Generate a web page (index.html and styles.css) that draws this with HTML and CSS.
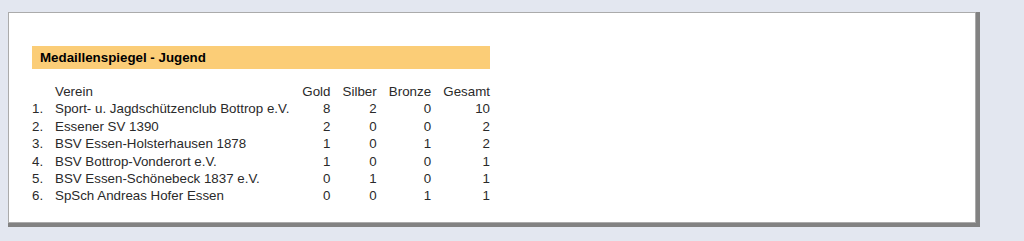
FILE: index.html
```html
<!DOCTYPE html>
<html lang="de">
<head>
<meta charset="utf-8">
<title>Medaillenspiegel - Jugend</title>
<link rel="stylesheet" href="styles.css">
</head>
<body>
<div class="frame">
  <div class="sheet">
    <div class="title">Medaillenspiegel - Jugend</div>
    <table class="medals">
      <thead>
        <tr><th class="rank"></th><th class="name">Verein</th><th class="num">Gold</th><th class="num">Silber</th><th class="num">Bronze</th><th class="num">Gesamt</th></tr>
      </thead>
      <tbody>
        <tr><td class="rank">1.</td><td class="name">Sport- u. Jagdschützenclub Bottrop e.V.</td><td class="num">8</td><td class="num">2</td><td class="num">0</td><td class="num">10</td></tr>
        <tr><td class="rank">2.</td><td class="name">Essener SV 1390</td><td class="num">2</td><td class="num">0</td><td class="num">0</td><td class="num">2</td></tr>
        <tr><td class="rank">3.</td><td class="name">BSV Essen-Holsterhausen 1878</td><td class="num">1</td><td class="num">0</td><td class="num">1</td><td class="num">2</td></tr>
        <tr><td class="rank">4.</td><td class="name">BSV Bottrop-Vonderort e.V.</td><td class="num">1</td><td class="num">0</td><td class="num">0</td><td class="num">1</td></tr>
        <tr><td class="rank">5.</td><td class="name">BSV Essen-Schönebeck 1837 e.V.</td><td class="num">0</td><td class="num">1</td><td class="num">0</td><td class="num">1</td></tr>
        <tr><td class="rank">6.</td><td class="name">SpSch Andreas Hofer Essen</td><td class="num">0</td><td class="num">0</td><td class="num">1</td><td class="num">1</td></tr>
      </tbody>
    </table>
  </div>
</div>
</body>
</html>
```
FILE: styles.css
```css
html, body {
  margin: 0;
  padding: 0;
}
body {
  background: #e3e7f0;
  font-family: "Liberation Sans", Arial, sans-serif;
  font-size: 13.33px;
  color: #2a2a2a;
  padding: 12px 0 0 8px;
}
.frame {
  width: 968px;
  border-right: 4px solid #828282;
  border-bottom: 4px solid #828282;
}
.sheet {
  background: #fff;
  border: 1px solid #ababab;
  padding: 33px 0 0 23px;
  box-sizing: border-box;
  height: 211px;
}
.title {
  width: 450px;
  height: 23px;
  line-height: 23px;
  background: #fbcd77;
  color: #000;
  font-weight: bold;
  padding-left: 8px;
}
.medals {
  margin-top: 14px;
  width: 458px;
  border-collapse: collapse;
}
.medals th, .medals td {
  padding: 0;
  height: 17.4px;
  line-height: 17.4px;
  font-weight: normal;
  white-space: nowrap;
}
.medals .rank {
  width: 23px;
  text-align: left;
}
.medals .name {
  text-align: left;
}
.medals .num {
  text-align: right;
  padding-left: 12px;
}
```
